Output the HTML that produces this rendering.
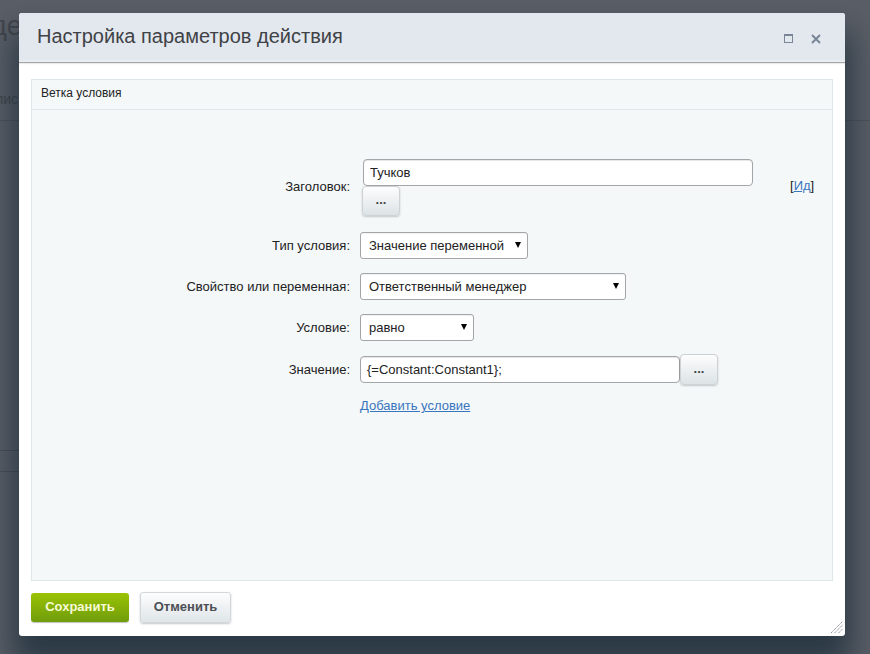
<!DOCTYPE html>
<html><head><meta charset="utf-8">
<style>
*{box-sizing:border-box;margin:0;padding:0}
html,body{width:870px;height:654px;overflow:hidden}
body{position:relative;background:#5a5e66;font-family:"Liberation Sans",sans-serif;}
.bgtext1{position:absolute;left:-9px;top:10px;font-size:27px;line-height:32px;color:#42464d;}
.bgtext2{position:absolute;left:-5px;top:91px;font-size:14px;line-height:16px;color:#43474e;}
.bgline1{position:absolute;left:0;top:120px;width:870px;height:1px;background:#4f535a}
.bgline2{position:absolute;left:0;top:450px;width:30px;height:22px;border-top:1px solid #4a4f56;border-bottom:1px solid #4a4f56}
.dlg{position:absolute;left:19px;top:13px;width:826px;height:623px;background:#fff;border-radius:3px;
  box-shadow:0 24px 30px 6px rgba(5,28,42,.56);overflow:hidden}
.hdr{position:absolute;left:0;top:0;width:826px;height:50px;background:linear-gradient(#e2e8ee 46px,#ebeff3 49px);border-bottom:1px solid #a4a6a8;box-shadow:0 1px 1px rgba(0,0,0,.08)}
.title{position:absolute;left:18px;top:12px;font-size:20px;color:#3f4246;white-space:nowrap}
.ic-max{position:absolute;left:765px;top:21px;width:9px;height:9px;border:1px solid #7a8597;border-top-width:2px}
.ic-x{position:absolute;left:792px;top:21px;width:10px;height:10px}
.panel{position:absolute;left:12px;top:66px;width:802px;height:502px;background:#f4f8f9;border:1px solid #dde6e8}
.phdr{position:absolute;left:0;top:0;width:800px;height:30px;border-bottom:1px solid #dde6e8;font-size:12px;color:#222;padding:6px 0 0 9px}
.f{position:absolute;font-size:13px;color:#222;white-space:nowrap}
.lbl{position:absolute;right:520px;font-size:13px;color:#222;white-space:nowrap;text-align:right;line-height:15px}
.inp{position:absolute;height:27px;background:#fff;border:1px solid #a3a6a9;border-radius:4px;font-size:13px;color:#222;line-height:25px;padding:0 6px;white-space:nowrap;box-shadow:inset 0 1px 1px rgba(0,0,0,.10)}
.sel{position:absolute;height:27px;background:#fff;border:1px solid #a3a6a9;border-radius:3px;font-size:13px;color:#222;line-height:25px;padding:0 8px;white-space:nowrap;box-shadow:inset 0 1px 1px rgba(0,0,0,.06)}
.arr{position:absolute;right:6px;top:9px;width:0;height:0;border-left:3px solid transparent;border-right:3px solid transparent;border-top:6px solid #000}
.btn3{position:absolute;border:1px solid #cdd2d5;border-radius:4px;background:linear-gradient(#fdfdfd,#dce3e6);font-size:13px;font-weight:bold;color:#444;text-align:center;box-shadow:0 1px 2px rgba(0,0,0,.2)}
.link{position:absolute;color:#3a76bd;text-decoration:underline;font-size:13px;white-space:nowrap;line-height:15px}
.save{position:absolute;left:31px;top:593px;width:98px;height:29px;border-radius:3px;background:linear-gradient(#9bc303,#6f9c0c);box-shadow:0 1px 1px rgba(0,0,0,.25);color:#f6fbd6;font-weight:bold;font-size:13px;text-align:center;line-height:27px}
.cancel{position:absolute;left:140px;top:592px;width:91px;height:31px;border-radius:3px;border:1px solid #d2d7da;background:linear-gradient(#fdfdfd,#dfe5e8);box-shadow:0 1px 2px rgba(0,0,0,.22);color:#4b4f54;font-weight:bold;font-size:13px;text-align:center;line-height:27px}
</style></head><body>
<div class="bgtext1">де</div>
<div class="bgtext2">лис</div>
<div class="bgline1"></div>
<div class="bgline2"></div>
<div class="dlg">
  <div class="hdr">
    <div class="title">Настройка параметров действия</div>
    <div class="ic-max"></div>
    <svg class="ic-x" viewBox="0 0 10 10"><path d="M1 1L9 9M9 1L1 9" stroke="#7a8597" stroke-width="2"/></svg>
  </div>
  <div class="panel">
    <div class="phdr">Ветка условия</div>
  </div>
</div>

<div class="lbl" style="top:179px">Заголовок:</div>
<div class="inp" style="left:363px;top:159px;width:390px;">Тучков</div>
<div class="btn3" style="left:362px;top:186px;width:38px;height:30px;line-height:26px">...</div>
<div class="f" style="left:790px;top:178px;line-height:15px">[<span style="color:#3a76bd;text-decoration:underline">Ид</span>]</div>

<div class="lbl" style="top:238px">Тип условия:</div>
<div class="sel" style="left:360px;top:232px;width:168px;">Значение переменной<span class="arr"></span></div>

<div class="lbl" style="top:279px">Свойство или переменная:</div>
<div class="sel" style="left:360px;top:273px;width:266px;">Ответственный менеджер<span class="arr"></span></div>

<div class="lbl" style="top:320px">Условие:</div>
<div class="sel" style="left:360px;top:314px;width:114px;">равно<span class="arr"></span></div>

<div class="lbl" style="top:362px">Значение:</div>
<div class="inp" style="left:360px;top:356px;width:320px;">{=Constant:Constant1};</div>
<div class="btn3" style="left:680px;top:354px;width:38px;height:31px;line-height:27px">...</div>

<div class="link" style="left:360px;top:398px">Добавить условие</div>

<div class="save">Сохранить</div>
<div class="cancel">Отменить</div>
<svg style="position:absolute;left:829px;top:620px" width="16" height="16" viewBox="0 0 16 16"><path d="M2 13L13.5 1.5M5.5 13L13.5 5M9.5 13L13.5 9" stroke="#8f9398" stroke-width="1" stroke-dasharray="1.5 0.5"/></svg>
</body></html>
